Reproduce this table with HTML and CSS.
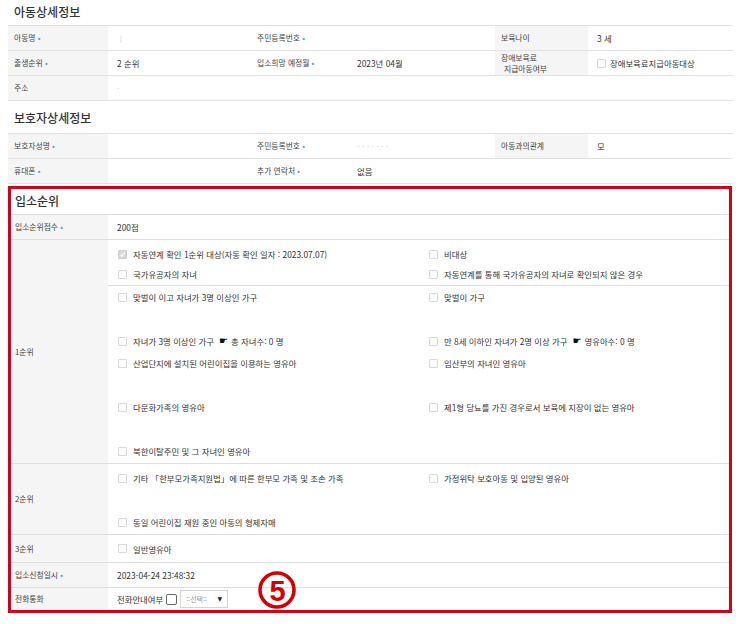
FILE: index.html
```html
<!DOCTYPE html>
<html lang="ko">
<head>
  <meta charset="UTF-8">
  <meta name="viewport" content="width=device-width, initial-scale=1.0">
  <title>입소신청 상세</title>
  <link rel="stylesheet" href="styles.css">
</head>
<body>
<div class="page">

  <section class="section">
    <h2 class="sec-title">아동상세정보</h2>
    <table class="info">
      <colgroup>
        <col class="c1"><col class="c2"><col class="c3"><col class="c4"><col class="c5"><col class="c6">
      </colgroup>
      <tr>
        <th class="lbl">아동명 <span class="req">•</span></th>
        <td class="faint">ㅣ</td>
        <th class="lbl plain">주민등록번호 <span class="req">•</span></th>
        <td></td>
        <th class="lbl">보육나이</th>
        <td>3 세</td>
      </tr>
      <tr>
        <th class="lbl">출생순위 <span class="req">•</span></th>
        <td>2 순위</td>
        <th class="lbl plain">입소희망 예정월 <span class="req">•</span></th>
        <td>2023년 04월</td>
        <th class="lbl two-line">장애보육료<br><span class="indent">지급아동여부</span></th>
        <td><span class="item"><span class="chk small"></span>장애보육료지급아동대상</span></td>
      </tr>
      <tr>
        <th class="lbl">주소</th>
        <td colspan="5" class="faint">·</td>
      </tr>
    </table>
  </section>

  <section class="section">
    <h2 class="sec-title">보호자상세정보</h2>
    <table class="info">
      <colgroup>
        <col class="c1"><col class="c2"><col class="c3"><col class="c4"><col class="c5"><col class="c6">
      </colgroup>
      <tr>
        <th class="lbl">보호자성명 <span class="req">•</span></th>
        <td></td>
        <th class="lbl plain">주민등록번호 <span class="req">•</span></th>
        <td class="faint">- · · · · · ·</td>
        <th class="lbl">아동과의관계</th>
        <td>모</td>
      </tr>
      <tr>
        <th class="lbl">휴대폰 <span class="req">•</span></th>
        <td></td>
        <th class="lbl plain">추가 연락처 <span class="req">•</span></th>
        <td colspan="3">없음</td>
      </tr>
    </table>
  </section>

  <section class="section rank-box">
    <h2 class="sec-title">입소순위</h2>
    <table class="rank">
      <colgroup><col class="r1"><col></colgroup>
      <tr class="row-score">
        <th>입소순위점수 <span class="req">•</span></th>
        <td>200점</td>
      </tr>
      <tr>
        <th>1순위</th>
        <td class="chk-cell">
          <div class="chk-grid first">
            <span class="item"><span class="chk on"><svg viewBox="0 0 9 9" width="7" height="7"><path d="M1.5 4.6 L3.6 6.6 L7.5 2.2" fill="none" stroke="#fff" stroke-width="1.4"/></svg></span>자동연계 확인 1순위 대상(자동 확인 일자 : 2023.07.07)</span>
            <span class="item"><span class="chk"></span>비대상</span>
            <span class="item"><span class="chk"></span>국가유공자의 자녀</span>
            <span class="item"><span class="chk"></span>자동연계를 통해 국가유공자의 자녀로 확인되지 않은 경우</span>
          </div>
          <div class="chk-grid">
            <span class="item"><span class="chk"></span>맞벌이 이고 자녀가 3명 이상인 가구</span>
            <span class="item"><span class="chk"></span>맞벌이 가구</span>
            <span></span><span></span>
            <span class="item"><span class="chk"></span>자녀가 3명 이상인 가구 <span class="hand">☛</span> 총 자녀수: 0 명</span>
            <span class="item"><span class="chk"></span>만 8세 이하인 자녀가 2명 이상 가구 <span class="hand">☛</span> 영유아수: 0 명</span>
            <span class="item"><span class="chk"></span>산업단지에 설치된 어린이집을 이용하는 영유아</span>
            <span class="item"><span class="chk"></span>임산부의 자녀인 영유아</span>
            <span></span><span></span>
            <span class="item"><span class="chk"></span>다문화가족의 영유아</span>
            <span class="item"><span class="chk"></span>제1형 당뇨를 가진 경우로서 보육에 지장이 없는 영유아</span>
            <span></span><span></span>
            <span class="item"><span class="chk"></span>북한이탈주민 및 그 자녀인 영유아</span>
            <span></span>
          </div>
        </td>
      </tr>
      <tr>
        <th>2순위</th>
        <td class="chk-cell">
          <div class="chk-grid second">
            <span class="item"><span class="chk"></span>기타 「한부모가족지원법」에 따른 한부모 가족 및 조손 가족</span>
            <span class="item"><span class="chk"></span>가정위탁 보호아동 및 입양된 영유아</span>
            <span></span><span></span>
            <span class="item"><span class="chk"></span>동일 어린이집 재원 중인 아동의 형제자매</span>
            <span></span>
          </div>
        </td>
      </tr>
      <tr class="row-third">
        <th>3순위</th>
        <td class="chk-cell"><div class="single"><span class="item"><span class="chk"></span>일반영유아</span></div></td>
      </tr>
      <tr>
        <th>입소신청일시 <span class="req">•</span></th>
        <td>2023-04-24 23:48:32</td>
      </tr>
      <tr class="row-call">
        <th>전화통화</th>
        <td>
          <span class="call">전화안내여부 <span class="chk dark"></span>
            <span class="select"><span>::선택::</span><span class="arrow">▼</span></span>
          </span>
        </td>
      </tr>
    </table>

    <svg class="mark" viewBox="0 0 40 38" width="40" height="38">
      <circle cx="20" cy="19" r="17" fill="none" stroke="#d20000" stroke-width="3.6"/>
      <text x="20.5" y="29.5" text-anchor="middle" font-size="29" font-weight="bold" font-family="Liberation Sans, Arial, sans-serif" fill="#d20000">5</text>
    </svg>
  </section>

</div>
</body>
</html>
```

FILE: styles.css
```css
body {
  margin: 0;
  font-family: "Noto Sans CJK KR", "Noto Sans", sans-serif;
  color: #333;
  background-color: #fff;
}

.page {
  width: 725px;
  margin-left: 8px;
}

.sec-title {
  margin: 0 0 1px;
  padding-left: 6px;
  font-size: 12px;
  font-weight: 500;
  line-height: 24px;
  color: #333;
}

.section + .section .sec-title {
  padding-top: 5px;
  margin-bottom: 3px;
}

/* info tables */
.info {
  width: 100%;
  table-layout: fixed;
  border-spacing: 0;
  border-top: 1px solid #e2e2e2;
}

.c1 { width: 100px; }
.c2 { width: 143px; }
.c3 { width: 97px; }
.c4 { width: 147px; }
.c5 { width: 93px; }
.c6 { width: 145px; }

.info th,
.info td {
  padding: 0 0 0 9px;
  line-height: 24px;
  border-bottom: 1px solid #e2e2e2;
  font-size: 8.4px;
  text-align: left;
  vertical-align: middle;
  white-space: nowrap;
  overflow: hidden;
}

.info .lbl {
  padding-left: 6px;
  background-color: #f5f5f5;
  color: #444;
  font-size: 7.8px;
  font-weight: normal;
}

.info .lbl.plain {
  background: none;
}

.info .two-line {
  line-height: 11px;
}

.indent {
  padding-left: 3px;
}

.req {
  color: #5d95e0;
  font-size: 8px;
  vertical-align: 0;
}

.faint {
  color: #d8d8d8;
}

/* check boxes */
.item {
  display: flex;
  align-items: center;
  font-size: 8.4px;
  color: #333;
  white-space: nowrap;
}

.chk {
  display: inline-flex;
  align-items: center;
  justify-content: center;
  flex: none;
  width: 9px;
  height: 9px;
  box-sizing: border-box;
  margin-right: 6px;
  border: 1px solid #d8d8d8;
  border-radius: 1px;
  background-color: #fbfbfb;
}

.chk.on {
  background-color: #d9d9d9;
  border-color: #cecece;
}

.chk.small {
  margin-right: 4px;
}

.chk.dark {
  width: 11px;
  height: 11px;
  margin: 0 3px 0 3px;
  border-color: #666;
  border-radius: 2px;
  background-color: #fff;
}

.hand {
  margin: 0 3px 0 5px;
  font-family: "DejaVu Sans", sans-serif;
  font-size: 10px;
  line-height: 10px;
  color: #111;
}

/* rank box */
.rank-box {
  position: relative;
  width: 724px;
  box-sizing: border-box;
  margin-top: 2px;
  border: 3px solid #d0021b;
}

.rank-box .sec-title {
  padding: 0 0 0 4px;
  margin: 0;
  height: 25px;
}

.section + .rank-box .sec-title {
  padding-top: 0;
  margin-bottom: 0;
}

.rank {
  width: 100%;
  table-layout: fixed;
  border-spacing: 0;
  border-top: 1px solid #dedede;
}

.r1 { width: 97px; }

.rank th,
.rank td {
  padding: 0 0 0 9px;
  line-height: 24px;
  border-bottom: 1px solid #dedede;
  font-size: 8.4px;
  text-align: left;
  vertical-align: middle;
  white-space: nowrap;
}

.rank th {
  padding-left: 4px;
  background-color: #f5f5f5;
  color: #444;
  font-size: 7.8px;
  font-weight: normal;
}

.rank .chk-cell {
  padding: 0;
  line-height: normal;
}

.row-third th,
.row-third td {
  line-height: 27px;
}

.row-call th,
.row-call td {
  line-height: 22px;
  border-bottom: none;
}

.chk-grid {
  display: grid;
  grid-template-columns: 311px 1fr;
  grid-auto-rows: 22px;
  padding: 0 0 1px 10px;
}

.chk-grid.first {
  grid-auto-rows: 20px;
  padding-top: 4px;
  border-bottom: 1px solid #dedede;
}

.chk-grid.second {
  padding-top: 3px;
}

.single {
  height: 27px;
  display: flex;
  align-items: center;
  padding-left: 10px;
}

.call {
  display: flex;
  align-items: center;
  color: #333;
}

.select {
  display: inline-flex;
  align-items: center;
  justify-content: space-between;
  width: 48px;
  height: 18px;
  box-sizing: border-box;
  padding: 0 5px 0 5px;
  border: 1px solid #d4d4d4;
  font-size: 7px;
  line-height: 16px;
  color: #999;
}

.arrow {
  font-family: "DejaVu Sans", sans-serif;
  font-size: 6px;
  color: #222;
}

.mark {
  position: absolute;
  left: 246px;
  top: 382px;
}
```
